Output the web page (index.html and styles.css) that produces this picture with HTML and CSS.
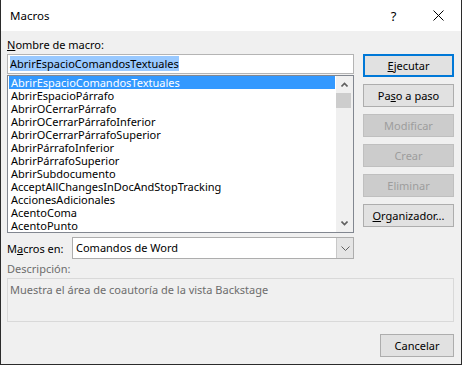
FILE: index.html
```html
<!DOCTYPE html>
<html lang="es">
<head>
<meta charset="utf-8">
<title>Macros</title>
<link rel="stylesheet" href="styles.css">
</head>
<body>
<div class="window">
  <div class="titlebar">
    <span class="title">Macros</span>
    <div class="title-buttons">
      <span class="tb help">?</span>
      <span class="tb close">
        <svg width="11" height="11" viewBox="0 0 11 11"><path d="M0.5 0.5 L10.5 10.5 M10.5 0.5 L0.5 10.5" stroke="#000" stroke-width="1" fill="none"/></svg>
      </span>
    </div>
  </div>
  <div class="content">
    <div class="main">
      <div class="left">
        <div class="label"><u>N</u>ombre de macro:</div>
        <div class="input"><span class="sel">AbrirEspacioComandosTextuales</span></div>
        <div class="list">
          <ul class="items">
            <li class="selected">AbrirEspacioComandosTextuales</li>
            <li>AbrirEspacioPárrafo</li>
            <li>AbrirOCerrarPárrafo</li>
            <li>AbrirOCerrarPárrafoInferior</li>
            <li>AbrirOCerrarPárrafoSuperior</li>
            <li>AbrirPárrafoInferior</li>
            <li>AbrirPárrafoSuperior</li>
            <li>AbrirSubdocumento</li>
            <li>AcceptAllChangesInDocAndStopTracking</li>
            <li>AccionesAdicionales</li>
            <li>AcentoComa</li>
            <li>AcentoPunto</li>
          </ul>
          <div class="scrollbar">
            <div class="arrow">
              <svg width="7" height="5" viewBox="0 0 7 5"><path d="M0.5 4.5 L3.5 1.5 L6.5 4.5" stroke="#606060" stroke-width="1.6" fill="none"/></svg>
            </div>
            <div class="thumb"></div>
            <div class="track"></div>
            <div class="arrow">
              <svg width="7" height="5" viewBox="0 0 7 5"><path d="M0.5 0.5 L3.5 3.5 L6.5 0.5" stroke="#606060" stroke-width="1.6" fill="none"/></svg>
            </div>
          </div>
        </div>
        <div class="macros-en">
          <span class="label-inline">M<u>a</u>cros en:</span>
          <div class="dropdown">
            <span class="dd-value">Comandos de Word</span>
            <span class="dd-btn">
              <svg width="9" height="5" viewBox="0 0 9 5"><path d="M0.5 0.5 L4.5 4.5 L8.5 0.5" stroke="#606060" stroke-width="1" fill="none"/></svg>
            </span>
          </div>
        </div>
      </div>
      <div class="right">
        <button class="btn default"><u>E</u>jecutar</button>
        <button class="btn">Pa<u>s</u>o a paso</button>
        <button class="btn disabled">Modificar</button>
        <button class="btn disabled">Crear</button>
        <button class="btn disabled">Eliminar</button>
        <button class="btn"><u>O</u>rganizador...</button>
      </div>
    </div>
    <div class="label gray">Descripción:</div>
    <div class="desc">Muestra el área de coautoría de la vista Backstage</div>
    <div class="footer">
      <button class="btn cancel">Cancelar</button>
    </div>
  </div>
</div>
</body>
</html>
```

FILE: styles.css
```css
* { box-sizing: border-box; }
html, body { margin: 0; padding: 0; background: #f0f0f0; }
body {
  font-family: "Noto Sans", "Open Sans", sans-serif;
  font-size: 11px;
  color: #000;
}
.window {
  width: 462px;
  height: 365px;
  background: #f0f0f0;
  border-left: 1px solid #2b2b2b;
  border-right: 1px solid #2b2b2b;
  border-bottom: 1px solid #2b2b2b;
  display: flex;
  flex-direction: column;
}
.titlebar {
  height: 31px;
  background: #fff;
  display: flex;
  align-items: center;
  justify-content: space-between;
  padding-left: 9px;
}
.title { font-size: 11.5px; line-height: 15px; }
.title-buttons { display: flex; height: 31px; }
.tb {
  width: 45px;
  display: flex;
  align-items: center;
  justify-content: center;
}
.help { font-size: 13px; }
.content {
  padding: 6px 7px 0 6px;
  display: flex;
  flex-direction: column;
}
.main {
  display: grid;
  grid-template-columns: 347px 91px;
  column-gap: 9px;
}
.label { line-height: 15px; margin-bottom: 2px; }
.label.gray { color: #6d6d6d; margin-top: 2px; }
.input {
  height: 20px;
  background: #fff;
  border: 1px solid #b4b4b4;
  padding: 1px 2px 0 2px;
  line-height: 16px;
  margin-bottom: 1px;
}
.sel { background: #99c9ff; }
.list {
  height: 158px;
  background: #fff;
  border: 1px solid #828790;
  display: flex;
}
.items {
  list-style: none;
  margin: 0;
  padding: 0 1px 0 1px;
  flex: 1;
  overflow: hidden;
}
.items li {
  height: 13px;
  line-height: 13px;
  padding-left: 2px;
  white-space: nowrap;
}
.items li.selected { background: #3399ff; color: #fff; }
.scrollbar {
  width: 17px;
  background: #f0f0f0;
  display: flex;
  flex-direction: column;
}
.arrow {
  height: 17px;
  display: flex;
  align-items: center;
  justify-content: center;
}
.thumb { height: 15px; margin: 0 2px 0 0; background: #cdcdcd; }
.track { flex: 1; }
.macros-en {
  display: flex;
  align-items: center;
  margin-top: 4px;
}
.label-inline { width: 65px; }
.dropdown {
  flex: 1;
  height: 22px;
  background: #fff;
  border: 1px solid #adadad;
  display: flex;
  align-items: stretch;
}
.dd-value { flex: 1; padding-left: 3px; line-height: 19px; }
.dd-btn {
  width: 17px;
  background: #e5e5e5;
  border-left: 1px solid #c8c8c8;
  display: flex;
  align-items: center;
  justify-content: center;
}
.right {
  display: flex;
  flex-direction: column;
  gap: 7px;
  padding-top: 17px;
}
.btn {
  font-family: inherit;
  font-size: 11px;
  height: 23px;
  width: 91px;
  background: #e1e1e1;
  border: 1px solid #adadad;
  color: #000;
  padding: 0;
  margin: 0;
}
.btn.default { border: 2px solid #0078d7; }
.btn.disabled { background: #cccccc; border-color: #bfbfbf; color: #9d9d9d; }
.desc {
  height: 44px;
  border: 1px solid #d9d9d9;
  color: #6d6d6d;
  padding: 3px 2px;
  line-height: 15px;
}
.footer {
  display: flex;
  justify-content: flex-end;
  margin-top: 12px;
}
.btn.cancel { width: 74px; }
```
